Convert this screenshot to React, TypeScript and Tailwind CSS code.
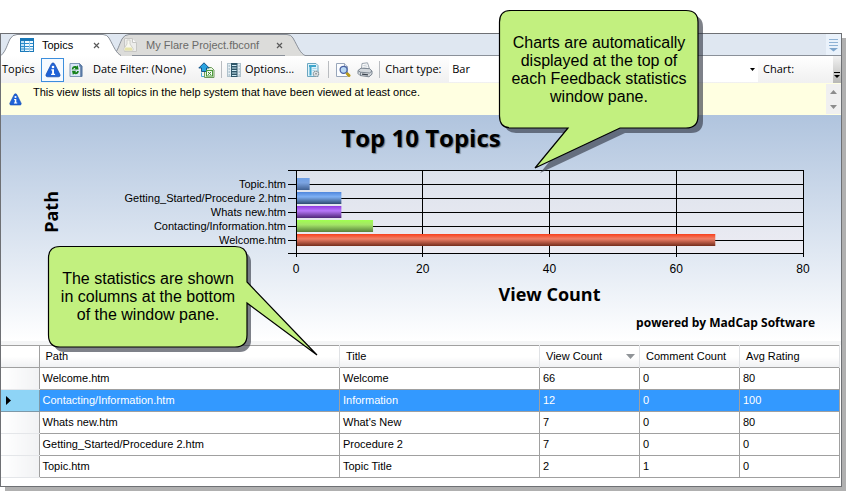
import type { ReactNode } from "react";

type Bar = { label: string; value: number; fill: string };

const bars: Bar[] = [
  { label: "Topic.htm", value: 2, fill: "slate" },
  { label: "Getting_Started/Procedure 2.htm", value: 7, fill: "blue" },
  { label: "Whats new.htm", value: 7, fill: "purple" },
  { label: "Contacting/Information.htm", value: 12, fill: "green" },
  { label: "Welcome.htm", value: 66, fill: "red" },
];

const gradients = [
  { id: "slate", top: "#6fa0e6", mid: "#7ba3e0", low: "#3f5f90" },
  { id: "blue", top: "#4f86dc", mid: "#7fb0f4", low: "#2f4a70" },
  { id: "purple", top: "#9038e0", mid: "#b878fa", low: "#4f2678" },
  { id: "green", top: "#a0ff50", mid: "#a4e468", low: "#56803a" },
  { id: "red", top: "#f8401c", mid: "#f08068", low: "#742c1c" },
];

const axis = [0, 20, 40, 60, 80];
const axisMax = 80;

const rows = [
  ["Welcome.htm", "Welcome", "66", "0", "80"],
  ["Contacting/Information.htm", "Information", "12", "0", "100"],
  ["Whats new.htm", "What's New", "7", "0", "80"],
  ["Getting_Started/Procedure 2.htm", "Procedure 2", "7", "0", "0"],
  ["Topic.htm", "Topic Title", "2", "1", "0"],
];
const selectedRow = 1;

function InfoIcon({ size }: { size: number }) {
  return (
    <svg width={size} height={size} viewBox="0 0 16 16" aria-hidden="true">
      <path d="M8 1c1 0 1.500.6 1.900 1.500l4.900 9.700c.7 1.500 0 2.600-1.500 2.600H2.700c-1.500 0-2.200-1.100-1.500-2.600l4.900-9.700C6.500 1.600 7 1 8 1z" fill="#1f62d8" stroke="#164aa8" strokeWidth=".7" />
      <circle cx="8" cy="5" r="1.300" fill="#fff" />
      <path d="M6.300 7.300h2.700v4.400h1.100v1.300H6.100v-1.300h1V8.600h-.8z" fill="#fff" />
    </svg>
  );
}

function TableIcon() {
  return (
    <svg width="14" height="14" viewBox="0 0 14 14" aria-hidden="true">
      <rect x=".5" y=".5" width="13" height="13" fill="#f2faff" stroke="#1a78b8" />
      <rect x="0" y="0" width="14" height="3" fill="#1878b8" />
      <rect x="1" y="3" width="3" height="10" fill="#bfe2f6" />
      <path d="M4.500 3v10.500M1 5.500h12M1 8.500h12M1 11h12" stroke="#2c8ccc" />
      <path d="M9.500 3v10.500" stroke="#9ccdea" />
    </svg>
  );
}

function FlaskPageIcon() {
  return (
    <svg width="16" height="16" viewBox="0 0 16 16" aria-hidden="true">
      <path d="M2.500 1.500h8l4 4v9h-12z" fill="#ededeb" stroke="#c6c6c4" />
      <path d="M10.500 1.500v4h4" fill="#fafafa" stroke="#c6c6c4" />
      <path d="M5 3h3v4l3 4.500c.6 1.500 0 2.500-1.500 2.500h-6C2 14 1.400 13 2 11.500L5 7z" fill="#f8f8f0" stroke="#cfcfca" />
      <path d="M3.500 10.500h6l1 2c0 .8-.5 1-1 1h-6c-.8 0-1.200-.5-1-1z" fill="#e6e3a8" />
    </svg>
  );
}

function RefreshIcon() {
  return (
    <svg width="14" height="16" viewBox="0 0 14 16" aria-hidden="true">
      <path d="M1 1.500h9.500l2.500 2.500v10.500H1z" fill="#d8e6f6" stroke="#7f98b8" />
      <path d="M10.500 1.500L13 4v10.500h-1.500V4.500h-1z" fill="#5a7aa8" stroke="#56759c" strokeWidth=".5" />
      <path d="M2.800 7.400C2.900 4.600 5.400 3.400 7.600 4.500L8.700 3.200 9.600 7.600H5.200l1.200-1.400C5.300 5.700 4.500 6.200 4.500 7.400z" fill="#148018" />
      <path d="M9.800 8.900c-.1 2.800-2.600 4-4.800 2.900l-1.100 1.300L3 8.700h4.400l-1.200 1.400c1.100.5 1.900 0 1.900-1.200z" fill="#148018" />
    </svg>
  );
}

function ExportIcon() {
  return (
    <svg width="17" height="16" viewBox="0 0 17 16" aria-hidden="true">
      <path d="M6.500 5.500h7l2.500 2.500v7.500H6.500z" fill="#e4f4da" stroke="#6c9a5c" />
      <path d="M6 .8l5.200 5.200H8.500v3.500h-5V6H.8z" fill="#2aa4e0" stroke="#0c4a80" strokeWidth=".9" />
      <rect x="8.500" y="8.500" width="6" height="5.500" fill="#fff" stroke="#4b9a3c" />
      <path d="M9.800 9.800l3.400 3.200M13.200 9.800L9.800 13" stroke="#3a8a2c" />
      <path d="M3.500 10.500v4H6" stroke="#4aa8d8" fill="none" />
    </svg>
  );
}

function OptionsIcon() {
  return (
    <svg width="14" height="16" viewBox="0 0 14 16" aria-hidden="true">
      <rect x=".5" y="1.500" width="13" height="13" fill="#e4eef4" stroke="#b0c2cc" />
      <rect x="4" y="1" width="6.500" height="14" fill="#2f5668" />
      <path d="M5 3.500h4.500M5 6h4.500M5 8.500h4.500M5 11h4.500M5 13.500h4.500" stroke="#cfeaf4" />
      <path d="M1.500 4h1.500M1.500 7h1.500M1.500 10h1.500M1.500 13h1.500M11.500 4h1.500M11.500 7h1.500M11.500 10h1.500M11.500 13h1.500" stroke="#8aa6b4" />
    </svg>
  );
}

function PageGearIcon() {
  return (
    <svg width="14" height="16" viewBox="0 0 14 16" aria-hidden="true">
      <path d="M1.500 1.500h8.500l2 2v11H1.500z" fill="#dff3fb" stroke="#6ba6c0" />
      <path d="M3 4h7M4.500 4v9.500" stroke="#3fa6cc" strokeWidth="2" />
      <path d="M6.500 6.500h4M6.500 8.500h2" stroke="#a5d6ea" />
      <circle cx="10" cy="11.800" r="2.600" fill="#f2f4f5" stroke="#8d999e" strokeWidth="1.400" strokeDasharray="1.500 .5" />
      <circle cx="10" cy="11.800" r="1" fill="#8d999e" />
    </svg>
  );
}

function PreviewIcon() {
  return (
    <svg width="16" height="16" viewBox="0 0 16 16" aria-hidden="true">
      <path d="M1.500 1.500h8l3 3v10h-11z" fill="#fbfdff" stroke="#98a6ba" />
      <path d="M9.500 1.500v3h3" fill="#dfe6ee" stroke="#98a6ba" />
      <circle cx="8.600" cy="7.800" r="3.500" fill="#b8d8f4" stroke="#4a62a4" strokeWidth="1.300" />
      <path d="M11.300 10.600l.8.800" stroke="#4a62a4" strokeWidth="2" />
      <path d="M12.300 11.800l1.700 1.700" stroke="#b79a1c" strokeWidth="3" strokeLinecap="round" />
    </svg>
  );
}

function PrinterIcon() {
  return (
    <svg width="16" height="16" viewBox="0 0 16 16" aria-hidden="true">
      <path d="M4.500 7L5 1.500l5.500-.7L12.500 7z" fill="#fff" stroke="#98a2ac" />
      <path d="M6.300 3.500l3.500-.5M6.300 5.300l4.200-.5" stroke="#a9b4be" strokeWidth=".7" />
      <path d="M1 8.500l3-2.300 8.500.5 2.500 2.300v3.200L12 14.800l-9-1.300-2-2z" fill="#d3d8dd" stroke="#7d8792" />
      <path d="M1 8.500l2.500 1.700 9 .8L15 9M3.500 10.200v3.300" stroke="#7d8792" fill="none" />
      <path d="M5 12.200l6 .7" stroke="#3c444e" strokeWidth="1.300" />
    </svg>
  );
}

function Separator() {
  return <span className="h-[17px] w-px bg-[#b9bcc0]" />;
}

function TabShape({ fill }: { fill: string }) {
  return (
    <svg className="absolute inset-0 h-full w-full" aria-hidden="true">
      <svg width="20" height="22" overflow="visible">
        <path d="M0 22C5 17 6 11 9 5Q11.500 .5 16 .5H21V22z" fill={fill} />
        <path d="M0 21.500C5 17 6 11 9 5Q11.500 .5 16 .5H21" fill="none" stroke="#8a9099" />
      </svg>
      <svg x="100%" width="20" height="22" overflow="visible">
        <path d="M-20.500 0.500H-18Q-14 .5 -12 4C-7 13 -5 19 0 22H-20.500z" fill={fill} />
        <path d="M-20.500 .5H-18Q-14 .5 -12 4C-7 13 -5 19 0 21.500" fill="none" stroke="#8a9099" />
      </svg>
    </svg>
  );
}

function Tab({ active, icon, title }: { active?: boolean; icon: ReactNode; title: string }) {
  return (
    <div className={active ? "relative z-10 flex h-[22px] w-[120px]" : "relative -ml-2 flex h-[22px] w-[192px]"}>
      <TabShape fill={active ? "#ffffff" : "#dcdcda"} />
      <div className={active ? "relative mx-[19px] flex grow items-center bg-white" : "relative ml-[19px] mr-5 flex grow items-center"}>
        {!active && <span className="absolute inset-0 border-y border-[#8a9099] bg-[#dcdcda]" />}
        {active && <span className="absolute inset-x-0 top-0 h-px bg-[#8a9099]" />}
        <button
          type="button"
          className={active ? "relative flex grow items-center gap-2 text-black" : "relative -ml-[10px] flex grow items-center gap-2 text-[#6a6a68]"}
        >
          {icon}
          {title}
        </button>
        <button type="button" aria-label={"Close " + title} className="relative flex size-3 items-center justify-center">
          <svg width="7" height="7" viewBox="0 0 7 7" aria-hidden="true">
            <path d="M1 1l5 5M6 1L1 6" stroke="#5a5a5a" strokeWidth="1.200" />
          </svg>
        </button>
      </div>
    </div>
  );
}

function Toolbar() {
  return (
    <div className="flex h-[27px] items-center bg-gradient-to-b from-white to-[#f0f0f0] font-['Open_Sans',sans-serif]">
      <span className="w-10 pl-px">Topics</span>
      <button type="button" aria-label="Show description" className="flex h-6 w-[23px] items-center justify-center border border-[#3c8edc] bg-[#f6faff]">
        <InfoIcon size={16} />
      </button>
      <button type="button" aria-label="Refresh" className="ml-[5px]">
        <RefreshIcon />
      </button>
      <button type="button" className="ml-[10px]">Date Filter: (None)</button>
      <button type="button" aria-label="Export to Excel" className="mr-[6px] ml-3">
        <ExportIcon />
      </button>
      <Separator />
      <button type="button" className="ml-[5px] flex items-center gap-1">
        <OptionsIcon />
        Options...
      </button>
      <button type="button" aria-label="Topic properties" className="mr-2 ml-3">
        <PageGearIcon />
      </button>
      <Separator />
      <button type="button" aria-label="Print preview" className="ml-[6px]">
        <PreviewIcon />
      </button>
      <button type="button" aria-label="Print" className="mx-[6px]">
        <PrinterIcon />
      </button>
      <Separator />
      <label htmlFor="chart-type" className="ml-[5px] w-16">Chart type:</label>
      <div className="relative flex h-6 grow items-center bg-white">
        <select id="chart-type" defaultValue="Bar" className="h-full w-full appearance-none bg-transparent pl-[3px]">
          <option>Bar</option>
          <option>Column</option>
          <option>Pie</option>
        </select>
        <svg className="pointer-events-none absolute right-[3px]" width="5" height="3" aria-hidden="true">
          <path d="M0 0h5L2.500 3z" fill="#000" />
        </svg>
      </div>
      <span className="w-[75px] pl-[5px]">Chart:</span>
      <button type="button" aria-label="More toolbar items" className="flex h-full w-2 items-end justify-center bg-gradient-to-b from-[#f2f2f2] to-[#b8b8b6] pb-1">
        <svg width="6" height="7" aria-hidden="true">
          <path d="M0 .5h6" stroke="#000" />
          <path d="M0 3h6L3 6z" fill="#000" />
        </svg>
      </button>
    </div>
  );
}

function InfoBar() {
  return (
    <div className="flex h-8 bg-[#ffffe1]">
      <span className="ml-2 mt-[10px]">
        <InfoIcon size={13} />
      </span>
      <p className="ml-[11px] mt-[3px] grow leading-3">
        This view lists all topics in the help system that have been viewed at least once.
      </p>
      <div className="my-px flex w-[15px] flex-col bg-[#f0f0f0]">
        <button type="button" aria-label="Scroll up" className="flex grow items-center justify-center">
          <svg width="7" height="4" aria-hidden="true"><path d="M0 4h7L3.500 0z" fill="#8c8c8c" /></svg>
        </button>
        <button type="button" aria-label="Scroll down" className="flex grow items-center justify-center">
          <svg width="7" height="4" aria-hidden="true"><path d="M0 0h7L3.500 4z" fill="#8c8c8c" /></svg>
        </button>
      </div>
    </div>
  );
}

function Plot() {
  return (
    <svg className="block h-[84px] w-full overflow-visible" role="img" aria-label="View count by path">
      <defs>
        <linearGradient id="plot" x1="0" y1="0" x2="0" y2="1">
          <stop offset="0" stopColor="#dde2ec" />
          <stop offset="1" stopColor="#ececf3" />
        </linearGradient>
        {gradients.map((g) => (
          <linearGradient key={g.id} id={g.id} x1="0" y1="0" x2="0" y2="1">
            <stop offset="0" stopColor={g.top} />
            <stop offset=".4" stopColor={g.mid} />
            <stop offset="1" stopColor={g.low} />
          </linearGradient>
        ))}
      </defs>
      <rect width="100%" height="84" fill="url(#plot)" />
      <g stroke="#000" shapeRendering="crispEdges">
        <line x1="-8" x2="100%" y1=".5" y2=".5" />
        <line x1="-8" x2="100%" y1="83.500" y2="83.500" />
        {bars.map((b, i) => (
          <line key={b.label} x1="-8" x2="100%" y1={14.5 + i * 14} y2={14.5 + i * 14} />
        ))}
        {axis.map((v) => (
          <line key={v} x1={(v / axisMax) * 100 + "%"} x2={(v / axisMax) * 100 + "%"} y1="0" y2="87" />
        ))}
      </g>
      {bars.map((b, i) => (
        <rect key={b.label} x="1" y={8 + i * 14} width={(b.value / axisMax) * 100 + "%"} height="12" fill={"url(#" + b.fill + ")"} />
      ))}
    </svg>
  );
}

function Chart() {
  return (
    <section className="bg-gradient-to-b from-[#b0c4de] to-white pb-[10px]">
      <h2 className="pt-2 text-center font-['Open_Sans',sans-serif] text-2xl leading-[30px] font-bold [text-shadow:1px_1px_1px_rgba(0,0,0,0.4)]">
        Top 10 Topics
      </h2>
      <div className="mt-[17px] flex pr-[38px] pl-[38px]">
        <div className="flex h-[84px] w-6 items-center justify-center">
          <span className="rotate-180 font-['Open_Sans',sans-serif] text-[18px] leading-6 font-bold [writing-mode:vertical-rl]">Path</span>
        </div>
        <ul className="w-[223px] shrink-0 pt-[7px] text-right leading-[14px]">
          {bars.map((b) => (
            <li key={b.label}>{b.label}</li>
          ))}
        </ul>
        <div className="ml-[10px] grow">
          <Plot />
          <div className="mt-2 flex justify-between font-['Liberation_Sans',sans-serif] text-xs leading-[14px]">
            {axis.map((v) => (
              <span key={v} className="flex w-0 justify-center">{v}</span>
            ))}
          </div>
          <p className="mt-[6px] text-center font-['Open_Sans',sans-serif] text-[18px] leading-6 font-bold">View Count</p>
        </div>
      </div>
      <p className="mt-[9px] pr-[26px] text-right font-['Open_Sans',sans-serif] text-xs leading-4 font-bold">
        powered by MadCap Software
      </p>
    </section>
  );
}

function Statistics() {
  const head = "border-r border-[#e0e2e5] pl-[6px] text-left font-normal";
  return (
    <div className="pr-px">
      <table className="w-full table-fixed border-collapse border-t border-[#a0a0a0]">
        <colgroup>
          <col className="w-[38px]" />
          <col />
          <col className="w-[200px]" />
          <col className="w-[100px]" />
          <col className="w-[100px]" />
          <col className="w-[100px]" />
        </colgroup>
        <thead>
          <tr className="h-[22px] border-b border-[#a0a0a0] bg-gradient-to-b from-white via-white to-[#f0f1f3]">
            <td className="border-r border-[#a0a0a0]" />
            <th scope="col" className={head}>Path</th>
            <th scope="col" className={head}>Title</th>
            <th scope="col" className={head}>
              <button type="button" className="flex w-full items-center justify-between pr-1">
                View Count
                <svg width="9" height="5" aria-hidden="true"><path d="M0 0h9L4.500 5z" fill="#909498" /></svg>
              </button>
            </th>
            <th scope="col" className={head}>Comment Count</th>
            <th scope="col" className={head}>Avg Rating</th>
          </tr>
        </thead>
        <tbody>
          {rows.map((row, i) => {
            const selected = i === selectedRow;
            return (
              <tr key={row[0]} className={selected ? "h-[22px] bg-[#3399ff] text-white" : "h-[22px] bg-white"}>
                <td className={selected ? "border-y border-r border-[#7d98a8] bg-[#8ed4f6] pl-[5px]" : "border-r border-b border-r-[#a0a0a0] border-b-[#e4e6e9] bg-gradient-to-r from-white to-[#f1f2f4]"}>
                  {selected && (
                    <svg width="5" height="9" aria-hidden="true"><path d="M0 0l5 4.500L0 9z" fill="#000" /></svg>
                  )}
                </td>
                {row.map((cell, c) => (
                  <td key={c} className="border-r border-b border-[#a0a0a0] pl-[3px]">{cell}</td>
                ))}
              </tr>
            );
          })}
        </tbody>
      </table>
    </div>
  );
}

function Callouts() {
  const text = "relative flex items-center justify-center text-center text-base leading-[18px]";
  return (
    <>
      <aside className="absolute top-[10px] left-[499px] h-[119px] w-[200px]">
        <svg className="absolute inset-0 overflow-visible" width="200" height="119" aria-hidden="true">
          <path d="M12 .5H187Q199 .5 199 12V106Q199 118 187 118H121L36 158L69 118H12Q.5 118 .5 106V12Q.5 .5 12 .5z" fill="#2f3340" fillOpacity=".62" transform="translate(5 5)" />
          <path d="M12 .5H187Q199 .5 199 12V106Q199 118 187 118H121L36 158L69 118H12Q.5 118 .5 106V12Q.5 .5 12 .5z" fill="#c2f07f" stroke="#000" strokeWidth="1.200" />
        </svg>
        <p className={text + " h-[119px]"}>
          Charts are automatically
          <br />
          displayed at the top of
          <br />
          each Feedback statistics
          <br />
          window pane.
        </p>
      </aside>
      <aside className="absolute top-[246px] left-[48px] h-[102px] w-[200px]">
        <svg className="absolute inset-0 overflow-visible" width="200" height="102" aria-hidden="true">
          <rect x="5" y="5" width="198" height="101" rx="11" fill="#2f3340" fillOpacity=".62" />
          <path d="M12 .5H187Q199 .5 199 12V36L269 109L199 57V89Q199 101 187 101H12Q.5 101 .5 89V12Q.5 .5 12 .5z" fill="#c2f07f" stroke="#000" strokeWidth="1.200" />
        </svg>
        <p className={text + " h-[102px]"}>
          The statistics are shown
          <br />
          in columns at the bottom
          <br />
          of the window pane.
        </p>
      </aside>
    </>
  );
}

export default function App() {
  return (
    <div className="relative overflow-hidden bg-white pt-[33px] pr-1 pb-[5px] font-['Liberation_Sans',sans-serif] text-[11px] text-black">
      <main className="border border-[#6e7074] bg-white shadow-[5px_5px_0_#b0b0b0]">
        <div className="flex h-[22px] bg-[#dfe7f1]">
          <Tab active icon={<TableIcon />} title="Topics" />
          <Tab icon={<FlaskPageIcon />} title="My Flare Project.fbconf" />
          <div className="flex grow items-center justify-end border-b border-[#8a9099]">
            <button type="button" aria-label="Open documents" className="flex h-full w-[15px] items-center justify-center bg-[#eaf2fb]">
              <svg width="9" height="14" aria-hidden="true">
                <path d="M0 1.500h9M0 4.500h9M0 7.500h9" stroke="#8fb2d4" />
                <path d="M0 10h9L4.500 13.500z" fill="#7fa6cc" />
              </svg>
            </button>
          </div>
        </div>
        <Toolbar />
        <InfoBar />
        <Chart />
        <div className="h-1 bg-[#f4f5f6]" />
        <Statistics />
        <div className="h-2" />
      </main>
      <Callouts />
    </div>
  );
}
